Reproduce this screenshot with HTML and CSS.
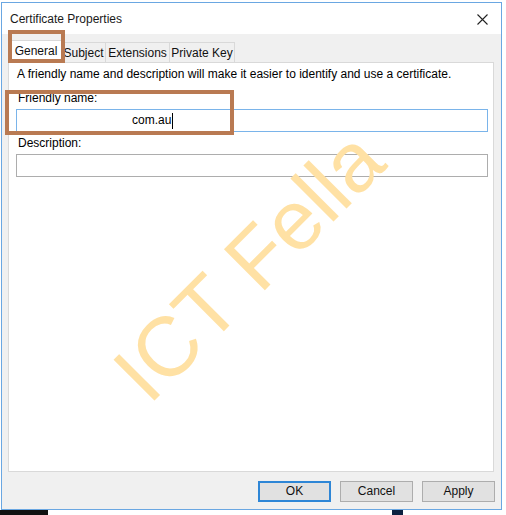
FILE: index.html
```html
<!DOCTYPE html>
<html>
<head lang="en">
    <meta charset="UTF-8">
    <title>Certificate Properties</title>
    <link rel="stylesheet" href="styles.css">
</head>
<body>
<div class="dialog">
    <div class="title-bar">
        <span class="title-text">Certificate Properties</span>
        <span class="close-btn">
            <svg width="11" height="11" viewBox="0 0 11 11"><path d="M0.5 0.5 L10.5 10.5 M10.5 0.5 L0.5 10.5" stroke="#222" stroke-width="1.1" fill="none"/></svg>
        </span>
    </div>
    <div class="dialog-body">
        <div class="tabs">
            <div class="tab tab-active">General</div>
            <div class="tab tab-subject">Subject</div>
            <div class="tab tab-ext">Extensions</div>
            <div class="tab tab-key">Private Key</div>
        </div>
        <div class="tab-panel">
            <p class="intro">A friendly name and description will make it easier to identify and use a certificate.</p>
            <label class="field-label">Friendly name:</label>
            <div class="text-box text-box-focus"><span class="value">com.au</span><span class="caret"></span></div>
            <label class="field-label">Description:</label>
            <div class="text-box"></div>
        </div>
        <div class="buttons">
            <div class="btn btn-default">OK</div>
            <div class="btn">Cancel</div>
            <div class="btn">Apply</div>
        </div>
    </div>
    <!-- annotations drawn over the screenshot -->
    <div class="mark mark-tab"></div>
    <div class="mark mark-name"></div>
    <div class="watermark">ICT Fella</div>
</div>
<div class="under-strip">
    <div class="strip-dark"></div>
    <div class="strip-navy"></div>
</div>
</body>
</html>
```

FILE: styles.css
```css
html, body {
    margin: 0;
    padding: 0;
    background: #ffffff;
    overflow: hidden;
}

p, label {
    margin: 0;
    padding: 0;
}

.dialog {
    position: relative;
    width: 501px;
    height: 508px;
    margin: 2px 0 0 1px;
    box-sizing: border-box;
    border: 1px solid #6aa7e2;
    background: #f0f0f0;
    font-family: "Liberation Sans", Arial, sans-serif;
    font-size: 12px;
    color: #000000;
    overflow: hidden;
}

.title-bar {
    height: 31px;
    background: #ffffff;
    display: flex;
    align-items: center;
    justify-content: space-between;
    padding: 0 13px 0 8px;
}

.title-text {
    font-size: 12px;
    color: #1a1a1a;
    margin-top: 1px;
}

.close-btn {
    display: flex;
    margin-top: 1px;
}

.dialog-body {
    padding: 8px 6px 0 6px;
}

.tabs {
    display: flex;
    height: 20px;
    padding-left: 2px;
}

.tab {
    box-sizing: border-box;
    height: 20px;
    border: 1px solid #d9d9d9;
    border-bottom: none;
    border-left: none;
    background: #f0f0f0;
    text-align: center;
    line-height: 20px;
    color: #111;
}

.tab-active {
    width: 52px;
    height: 22px;
    margin-top: -2px;
    line-height: 21px;
    background: #ffffff;
    border-left: 1px solid #d9d9d9;
    position: relative;
    z-index: 1;
    margin-bottom: -1px;
}

.tab-subject { width: 44px; }
.tab-ext { width: 64px; }
.tab-key { width: 65px; }

.tab-panel {
    box-sizing: border-box;
    width: 486px;
    height: 410px;
    background: #ffffff;
    border: 1px solid #d9d9d9;
    padding: 4px 7px 0 7px;
}

.intro {
    line-height: 15px;
    padding-left: 1px;
}

.field-label {
    display: block;
    line-height: 15px;
    margin-top: 9px;
    padding-left: 2px;
}

.text-box {
    box-sizing: border-box;
    width: 472px;
    height: 23px;
    margin-top: 3px;
    border: 1px solid #adadad;
    background: #ffffff;
    display: flex;
    align-items: center;
}

.text-box-focus {
    border-color: #7ab4ea;
    margin-bottom: -5px;
}

.value {
    padding-left: 115px;
    line-height: 15px;
}

.caret {
    width: 1px;
    height: 16px;
    background: #000;
    margin-left: 1px;
}

.buttons {
    display: flex;
    justify-content: flex-end;
    gap: 9px;
    padding-top: 9px;
}

.btn {
    box-sizing: border-box;
    width: 73px;
    height: 21px;
    border: 1px solid #adadad;
    background: #e1e1e1;
    text-align: center;
    line-height: 19px;
    color: #111;
}

.btn-default {
    border: 2px solid #2e86d6;
    line-height: 17px;
}

.mark {
    position: absolute;
    box-sizing: border-box;
    border: 4px solid #b97a52;
    z-index: 3;
}

.mark-tab {
    left: 6px;
    top: 27px;
    width: 57px;
    height: 33px;
}

.mark-name {
    left: 3px;
    top: 87px;
    width: 229px;
    height: 45px;
}

/* rotated around the start of the baseline */
.watermark {
    position: absolute;
    left: 147px;
    top: 332px;
    font-family: "Liberation Sans", Arial, sans-serif;
    font-size: 84px;
    line-height: 84px;
    color: #ffe1a4;
    transform-origin: 0 71px;
    transform: rotate(-45deg);
    white-space: nowrap;
    z-index: 2;
    pointer-events: none;
}

.under-strip {
    display: flex;
    height: 6px;
}

.strip-dark {
    width: 48px;
    background: #111111;
}

.strip-navy {
    width: 11px;
    margin-left: 344px;
    background: #0d2140;
}
```
